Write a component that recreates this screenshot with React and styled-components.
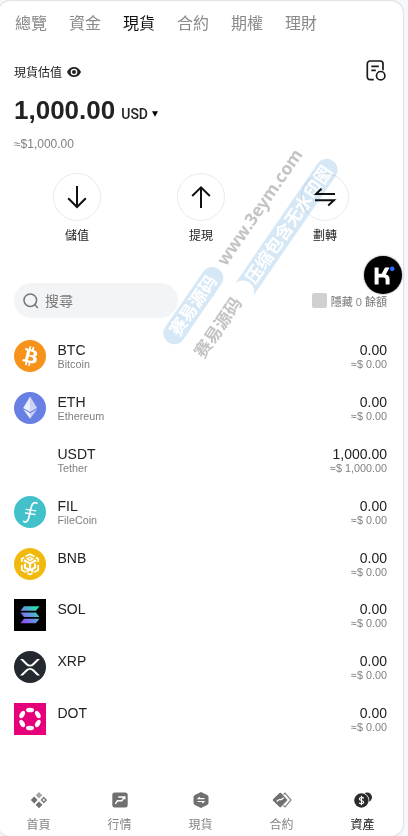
import React from 'react';
import styled, {createGlobalStyle} from 'styled-components';

const tabs = ['總覽', '資金', '現貨', '合約', '期權', '理財'];

const coins = [
    {symbol: 'BTC', name: 'Bitcoin', amount: '0.00', value: '≈$ 0.00', icon: BtcIcon},
    {symbol: 'ETH', name: 'Ethereum', amount: '0.00', value: '≈$ 0.00', icon: EthIcon},
    {symbol: 'USDT', name: 'Tether', amount: '1,000.00', value: '≈$ 1,000.00'},
    {symbol: 'FIL', name: 'FileCoin', amount: '0.00', value: '≈$ 0.00', icon: FilIcon},
    {symbol: 'BNB', amount: '0.00', value: '≈$ 0.00', icon: BnbIcon},
    {symbol: 'SOL', amount: '0.00', value: '≈$ 0.00', icon: SolIcon},
    {symbol: 'XRP', amount: '0.00', value: '≈$ 0.00', icon: XrpIcon},
    {symbol: 'DOT', amount: '0.00', value: '≈$ 0.00', icon: DotIcon},
];

const navItems = [
    {label: '首頁', icon: HomeIcon},
    {label: '行情', icon: MarketIcon},
    {label: '現貨', icon: SpotIcon},
    {label: '合約', icon: FuturesIcon},
    {label: '資產', icon: AssetsIcon, active: true},
];

export default function App() {
    return (
        <>
            <GlobalStyle />
            <Screen>
                <Tabs>
                    {tabs.map(tab => <Tab key={tab} $active={tab === '現貨'}>{tab}</Tab>)}
                </Tabs>
                <BalanceHeader>
                    <BalanceLabel>現貨估值 <EyeIcon /></BalanceLabel>
                    <RecordIcon />
                </BalanceHeader>
                <Balance>
                    <Total>1,000.00</Total>
                    <Currency>USD</Currency>
                    <Caret viewBox="0 0 6 6"><path d="M0 .3h6L3 5.7z" /></Caret>
                </Balance>
                <Approx>≈$1,000.00</Approx>
                <Actions>
                    <Action>
                        <ActionCircle>
                            <ActionIcon viewBox="0 0 24 24"><path d="M12 1v21M3.2 13.3l8.8 8.700 8.8-8.700" /></ActionIcon>
                        </ActionCircle>
                        儲值
                    </Action>
                    <Action>
                        <ActionCircle>
                            <ActionIcon viewBox="0 0 24 24"><path d="M12 23V2M3.2 11L12 2.300l8.8 8.700" /></ActionIcon>
                        </ActionCircle>
                        提現
                    </Action>
                    <Action>
                        <ActionCircle>
                            <ActionIcon viewBox="0 0 24 24"><path d="M22 9H3l5.500-5.300M2 15.200h19l-5.800 5.400" /></ActionIcon>
                        </ActionCircle>
                        劃轉
                    </Action>
                </Actions>
                <Filters>
                    <Search>
                        <SearchIcon viewBox="0 0 16 16"><circle cx="7.3" cy="7.2" r="6.300" /><path d="M11.7 11.6l3.200 3.300" /></SearchIcon>
                        搜尋
                    </Search>
                    <HideZero><Checkbox />隱藏 0 餘額</HideZero>
                </Filters>
                <CoinList>
                    {coins.map(coin => (
                        <CoinRow key={coin.symbol}>
                            <CoinLogo>{coin.icon && <coin.icon />}</CoinLogo>
                            <CoinText>
                                <Main>{coin.symbol}</Main>
                                <Sub>{coin.name}</Sub>
                            </CoinText>
                            <CoinAmount>
                                <Main>{coin.amount}</Main>
                                <Sub>{coin.value}</Sub>
                            </CoinAmount>
                        </CoinRow>
                    ))}
                </CoinList>
                <BottomNav>
                    {navItems.map(item => (
                        <NavItem key={item.label} $active={item.active}>
                            <item.icon />
                            {item.label}
                        </NavItem>
                    ))}
                </BottomNav>
            </Screen>
            <Watermark>
                <WatermarkRow>
                    <WatermarkPill>赛易源码</WatermarkPill>
                    <WatermarkUrl>www.3eym.com</WatermarkUrl>
                </WatermarkRow>
                <WatermarkRow>
                    <WatermarkName>赛易源码</WatermarkName>
                    <WatermarkBand>压缩包含无水印图</WatermarkBand>
                </WatermarkRow>
            </Watermark>
            <FloatingBadge>
                <svg width="38" height="38" viewBox="0 0 38 38">
                    <path d="M10.6 11.5h4v6.3h3.1l3.3-6.3h4.5l-3.7 7c2.4.4 3.8 2 3.8 4.4v5.6h-4v-4.9c0-1.4-.7-2.1-2-2.1h-5v7h-4z" fill="#fff" />
                    <circle cx="28.2" cy="12.8" r="2.4" fill="#2868ff" />
                </svg>
            </FloatingBadge>
        </>
    )
}

function EyeIcon() {
    return (
        <svg width="14" height="10" viewBox="0 0 14 10">
            <path d="M7 0C3.8 0 1.200 2 0 5c1.200 3 3.800 5 7 5s5.800-2 7-5c-1.200-3-3.800-5-7-5z" fill="#222" />
            <circle cx="7" cy="5" r="3.300" fill="#fff" />
            <circle cx="7" cy="5" r="2" fill="#222" />
        </svg>
    )
}

function RecordIcon() {
    return (
        <svg width="20" height="21" viewBox="0 0 20 21" fill="none" stroke="#1b1b1b" strokeWidth="1.7">
            <path d="M7.800 19.600H4a2.700 2.700 0 0 1-2.700-2.700V3.700A2.700 2.700 0 0 1 4 1h10.300A2.700 2.700 0 0 1 17 3.700v6.600M5.300 6.300h7.500M5.300 10.300h4.500" />
            <circle cx="14.700" cy="15.700" r="4.200" />
        </svg>
    )
}

function BtcIcon() {
    return (
        <svg width="32" height="32" viewBox="0 0 32 32">
            <circle cx="16" cy="16" r="16" fill="#f7931a" />
            <path fill="#fff" d="M23.189 14.02c.314-2.096-1.283-3.223-3.465-3.975l.708-2.84-1.728-.43-.69 2.765c-.454-.114-.92-.22-1.385-.326l.695-2.783L15.596 6l-.708 2.839c-.376-.086-.746-.17-1.104-.26l.002-.009-2.384-.595-.46 1.846s1.283.294 1.256.312c.7.175.826.638.805 1.006l-.806 3.235c.048.012.11.03.18.057l-.183-.045-1.13 4.532c-.086.212-.303.531-.793.41.018.025-1.256-.313-1.256-.313l-.858 1.978 2.25.561c.418.105.828.215 1.231.318l-.715 2.872 1.727.43.708-2.84c.472.127.93.245 1.378.357l-.706 2.828 1.728.43.715-2.866c2.948.558 5.164.333 6.097-2.333.752-2.146-.037-3.385-1.588-4.192 1.13-.26 1.98-1.003 2.207-2.538zm-3.95 5.538c-.533 2.147-4.148.986-5.32.695l.95-3.805c1.172.293 4.929.872 4.37 3.11zm.535-5.569c-.487 1.953-3.495.96-4.47.717l.86-3.45c.975.243 4.118.696 3.61 2.733z" />
        </svg>
    )
}

function EthIcon() {
    return (
        <svg width="32" height="32" viewBox="0 0 32 32">
            <circle cx="16" cy="16" r="16" fill="#687fe3" />
            <g transform="translate(.8 .8) scale(.93)" fill="#fff">
                <path d="M16.498 4L9 16.220l7.498 4.353z" fillOpacity=".85" />
                <path d="M16.498 4v16.573l7.497-4.353z" fillOpacity=".65" />
                <path d="M16.498 12.870L9 16.220l7.498 4.353 7.497-4.353z" fillOpacity=".1" />
                <path d="M16.498 27.995v-6.028L9 17.616z" fillOpacity=".9" />
                <path d="M16.498 21.968v6.027L24 17.616z" fillOpacity=".65" />
            </g>
        </svg>
    )
}

function FilIcon() {
    return (
        <svg width="32" height="32" viewBox="0 0 32 32" fill="none" stroke="#fff" strokeLinecap="round">
            <circle cx="16" cy="16" r="16" fill="#42c1ca" stroke="none" />
            <path d="M9.800 25.300c1.600 1.400 3.700.6 4.700-2.500 1.100-3.500 1.700-8.500 2.900-12.400.9-2.900 3.300-4.900 5.500-3.200" strokeWidth="1.700" />
            <path d="M12.200 13.300l9.500 1.500M11.500 17l9.500 1.500" strokeWidth="1.300" />
        </svg>
    )
}

function BnbIcon() {
    return (
        <svg width="32" height="32" viewBox="0 0 32 32" fill="none" stroke="#fff" strokeWidth="1.8">
            <circle cx="16" cy="16" r="16" fill="#f0b90b" stroke="none" />
            <path d="M11.500 8.500L16 6.200l4.500 2.300M7.800 14v-3.200l2.500-1.300M21.700 9.500l2.500 1.300V14M7.800 17v5l4.200 2.300M24.200 17v5L20 24.300M13.500 25.200l2.500 1.300 2.500-1.300" />
            <path d="M10 12.200l6 3.300 6-3.300M16 15.500V23M11 15.500v4.200l2.700 1.500v3M21 15.500v4.200l-2.700 1.500v3" strokeWidth="2.200" />
            <path d="M13 10.800l3-1.500 3 1.500-3 1.600z" strokeWidth="1.300" />
        </svg>
    )
}

function SolIcon() {
    return (
        <svg width="32" height="32" viewBox="0 0 32 32">
            <defs>
                <linearGradient id="sol" gradientUnits="userSpaceOnUse" x1="25" y1="7" x2="8" y2="24">
                    <stop offset="0" stopColor="#19f5a0" />
                    <stop offset=".5" stopColor="#5c9ddb" />
                    <stop offset="1" stopColor="#9945ff" />
                </linearGradient>
            </defs>
            <path d="M0 0h32v32H0z" fill="#000" />
            <path d="M10 7.200h15.500l-3.600 4.500H6.500zM6.500 13.500h15.400l3.600 4.600H10zM10 19.800h15.500l-3.600 4.500H6.500z" fill="url(#sol)" />
        </svg>
    )
}

function XrpIcon() {
    return (
        <svg width="32" height="32" viewBox="0 0 32 32">
            <circle cx="16" cy="16" r="16" fill="#23292f" />
            <path fill="#fff" d="M23.070 8h2.890l-6.015 5.957a5.621 5.621 0 0 1-7.890 0L6.035 8H8.930l4.570 4.523a3.556 3.556 0 0 0 4.996 0L23.070 8zM8.895 24.563H6l6.055-5.993a5.621 5.621 0 0 1 7.890 0L26 24.562h-2.895L18.500 20a3.556 3.556 0 0 0-4.996 0l-4.610 4.563z" />
        </svg>
    )
}

function DotIcon() {
    return (
        <svg width="32" height="32" viewBox="0 0 32 32">
            <path d="M0 0h32v32H0z" fill="#e6007a" />
            {[0, 60, 120, 180, 240, 300].map(angle => (
                <ellipse key={angle} cx="16" cy="7" rx="4" ry="2.300" fill="#fff" transform={`rotate(${angle} 16 16)`} />
            ))}
        </svg>
    )
}

function HomeIcon() {
    return (
        <svg width="18" height="18" viewBox="0 0 18 18" fill="#707070">
            <path d="M9 .9l3.300 3.300L9 7.500 5.700 4.200z" fill="#a5a5a5" />
            <path d="M4.200 5.600L7.600 9l-3.400 3.400L.8 9zM9 10.400l3.400 3.400L9 17.200l-3.400-3.400z" />
            <path d="M13.800 5.600L17.200 9l-3.400 3.400L10.400 9zm0 2.200L12.500 9l1.300 1.200L15 9z" fillRule="evenodd" fill="#808080" />
        </svg>
    )
}

function MarketIcon() {
    return (
        <svg width="18" height="18" viewBox="0 0 18 18">
            <rect x="1.300" y="1.500" width="15.400" height="15" rx="2.500" fill="#707070" />
            <path d="M4.300 12.900l2.200-3.100h4.300l2.400-3.700M7.300 6h6.500v2.300" fill="none" stroke="#fff" strokeWidth="1.500" />
        </svg>
    )
}

function SpotIcon() {
    return (
        <svg width="18" height="18" viewBox="0 0 18 18">
            <path d="M9 .9l6.200 3.200q1.300.8 1.300 2.200v5.400q0 1.400-1.300 2.200L9 17.100l-6.200-3.200q-1.300-.8-1.300-2.200V6.300q0-1.400 1.300-2.200z" fill="#707070" />
            <path d="M12.500 7.700H6.200l1.600-1.600M5.500 10.500h6.300l-1.600 1.600" fill="none" stroke="#fff" strokeWidth="1.200" />
        </svg>
    )
}

function FuturesIcon() {
    return (
        <svg width="20" height="18" viewBox="0 0 20 18">
            <path d="M11.500 3.500L13 2.200 19 9l-6 6.800-1.500-1.300" fill="none" stroke="#858585" strokeWidth="1.200" />
            <path d="M7.500 2.100q.8-.7 1.600 0L15.500 9l-6.400 6.900q-.8.700-1.600 0L1 9.700Q.4 9 1 8.300z" fill="#707070" />
            <path d="M4.700 10.600l2.500-2h2l2.500-1.800" fill="none" stroke="#fff" strokeWidth="1.300" />
        </svg>
    )
}

function AssetsIcon() {
    return (
        <svg width="18" height="18" viewBox="0 0 18 18">
            <circle cx="13.200" cy="6.300" r="4.800" fill="#2b2b2b" />
            <circle cx="7.400" cy="9.500" r="7.900" fill="#fff" />
            <circle cx="7.400" cy="9.500" r="7.200" fill="#2b2b2b" />
            <path d="M9.700 7.300C9 6.300 5.400 5.900 5.400 7.900s4.200 1.200 4.200 3.300-3.800 1.900-4.500.5M7.500 4.800v9.400" fill="none" stroke="#fff" strokeWidth="1.200" />
        </svg>
    )
}

const GlobalStyle = createGlobalStyle`
body {
    margin: 0;
    background: #f7f8fc;
    font-family: "Liberation Sans", "Noto Sans CJK TC", sans-serif;
    color: #222;
    overflow: hidden;
}
`;

const Screen = styled.div`
box-sizing: border-box;
display: flex;
flex-direction: column;
width: 405px;
height: 835px;
margin: 1px 0 0 -2px;
border-radius: 12px;
background: #fff;
box-shadow: 0 0 2px rgba(0, 0, 0, 0.3);
`;

const Tabs = styled.div`
display: flex;
gap: 22px;
padding: 11px 17px 0;
`;

const Tab = styled.div`
font-size: 16px;
line-height: 24px;
color: ${props => props.$active ? '#111' : '#8a8a8a'};
`;

const BalanceHeader = styled.div`
display: flex;
align-items: center;
justify-content: space-between;
height: 24px;
margin: 22px 17px 0 16px;
`;

const BalanceLabel = styled.div`
display: flex;
align-items: center;
gap: 5px;
margin-top: 3px;
font-size: 12px;
`;

const Balance = styled.div`
display: flex;
align-items: baseline;
height: 30px;
margin: 13px 16px 0;
`;

const Total = styled.div`
font-size: 26px;
line-height: 30px;
font-weight: bold;
`;

const Currency = styled.div`
margin-left: 6px;
font-family: Roboto, "Liberation Sans", sans-serif;
font-size: 14px;
font-weight: 500;
`;

const Caret = styled.svg`
width: 6px;
height: 6px;
margin-left: 4px;
transform: translateY(-2px);
`;

const Approx = styled.div`
margin: 11px 16px 0;
font-size: 12px;
line-height: 16px;
color: #808080;
`;

const Actions = styled.div`
display: flex;
justify-content: space-between;
margin: 21px 54px 0 55px;
`;

const Action = styled.div`
display: flex;
flex-direction: column;
align-items: center;
gap: 6px;
font-size: 12px;
line-height: 18px;
`;

const ActionCircle = styled.div`
box-sizing: border-box;
display: flex;
align-items: center;
justify-content: center;
width: 48px;
height: 48px;
border: 1px solid #e8eaed;
border-radius: 50%;
`;

const ActionIcon = styled.svg`
width: 24px;
height: 24px;
fill: none;
stroke: #111;
stroke-width: 2;
`;

const Filters = styled.div`
display: flex;
align-items: center;
justify-content: space-between;
margin: 38px 16px 0;
`;

const Search = styled.div`
box-sizing: border-box;
display: flex;
align-items: center;
gap: 6px;
width: 164px;
height: 35px;
padding: 0 9px;
border-radius: 18px;
background: #f3f4f6;
font-size: 14px;
line-height: 20px;
color: #7a7a7a;
`;

const SearchIcon = styled.svg`
width: 16px;
height: 16px;
fill: none;
stroke: #777;
stroke-width: 1.5;
`;

const HideZero = styled.div`
display: flex;
align-items: center;
gap: 4px;
font-size: 11px;
font-weight: 500;
color: #888;
`;

const Checkbox = styled.div`
width: 15px;
height: 15px;
border-radius: 2px;
background: #d0d0d0;
`;

const CoinList = styled.div`
display: flex;
flex-direction: column;
gap: 19.9px;
margin: 22px 16px 0;
`;

const CoinRow = styled.div`
display: flex;
height: 32px;
`;

const CoinLogo = styled.div`
width: 32px;
height: 32px;
margin-right: 11.5px;
svg { display: block; }
`;

const CoinText = styled.div`
padding-top: 2px;
`;

const CoinAmount = styled(CoinText)`
margin-left: auto;
text-align: right;
`;

const Main = styled.div`
font-size: 14px;
line-height: 16px;
`;

const Sub = styled.div`
font-size: 10.8px;
line-height: 12px;
color: #808080;
`;

const BottomNav = styled.div`
display: flex;
margin-top: auto;
padding-bottom: 2px;
`;

const NavItem = styled.div`
display: flex;
flex: 1;
flex-direction: column;
align-items: center;
gap: 7px;
font-size: 12px;
line-height: 18px;
color: ${props => props.$active ? '#222' : '#858585'};
`;

const Watermark = styled.div`
position: absolute;
left: 159px;
top: 336px;
display: flex;
flex-direction: column;
gap: 11px;
transform: rotate(-55.5deg);
transform-origin: 0 0;
mix-blend-mode: multiply;
font-family: "Noto Sans", "Noto Sans CJK SC", sans-serif;
font-weight: bold;
font-size: 17.3px;
line-height: 22px;
white-space: nowrap;
`;

const WatermarkRow = styled.div`
display: flex;
height: 22px;
`;

const WatermarkPill = styled.div`
width: 89px;
border-radius: 11px;
background: #d6e8f6;
color: #fff;
text-align: center;
`;

const WatermarkUrl = styled.div`
margin-left: 6px;
line-height: 19px;
color: #c4c4c4;
`;

const WatermarkName = styled.div`
margin-left: 6px;
color: #c4c4c4;
`;

const WatermarkBand = styled.div`
box-sizing: border-box;
width: 158px;
margin-left: 10px;
padding-left: 11px;
border-radius: 0 11px 11px 0;
background: radial-gradient(circle at -1px 50%, transparent 11px, #d6e8f6 11.5px);
color: #fff;
`;

const FloatingBadge = styled.div`
position: absolute;
left: 364px;
top: 256px;
width: 38px;
height: 38px;
border-radius: 50%;
background: #000;
box-shadow: 0 0 2px #777;
`;
